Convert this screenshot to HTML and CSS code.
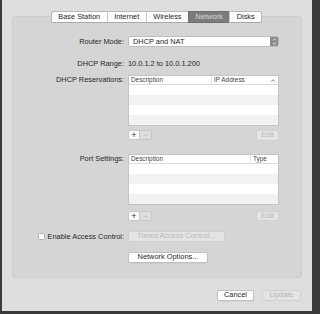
FILE: index.html
```html
<!DOCTYPE html>
<html>
<head>
<meta charset="utf-8">
<link rel="stylesheet" href="styles.css">
</head>
<body>
<div class="window">
  <div class="group">
    <div class="tabs">
      <div class="tab">Base Station</div>
      <div class="tab">Internet</div>
      <div class="tab">Wireless</div>
      <div class="tab selected">Network</div>
      <div class="tab">Disks</div>
    </div>

    <div class="row row-router">
      <div class="label">Router Mode:</div>
      <div class="popup">
        <span class="popup-text">DHCP and NAT</span>
        <span class="popup-arrow">
          <svg width="7" height="9" viewBox="0 0 7 9"><path d="M2 3.2 L3.5 1.8 L5 3.2 M2 5.8 L3.5 7.2 L5 5.8" fill="none" stroke="#f2f2f2" stroke-width="0.9"/></svg>
        </span>
      </div>
    </div>

    <div class="row row-range">
      <div class="label">DHCP Range:</div>
      <div class="value">10.0.1.2 to 10.0.1.200</div>
    </div>

    <div class="row row-table row-res">
      <div class="label label-top">DHCP Reservations:</div>
      <div class="table">
        <div class="thead">
          <div class="th th-desc-res">Description</div>
          <div class="th th-ip">IP Address
            <svg class="sort" width="6" height="5" viewBox="0 0 6 5"><path d="M1.2 3.5 L3 1.7 L4.8 3.5" fill="none" stroke="#555" stroke-width="0.8"/></svg>
          </div>
        </div>
        <div class="tr"></div>
        <div class="tr alt"></div>
        <div class="tr"></div>
        <div class="tr alt"></div>
      </div>
    </div>

    <div class="row row-tools">
      <div class="label"></div>
      <div class="tools">
        <div class="pm">
          <div class="pm-btn plus">+</div>
          <div class="pm-btn minus">−</div>
        </div>
        <div class="btn disabled edit">Edit</div>
      </div>
    </div>

    <div class="row row-table row-port">
      <div class="label label-top">Port Settings:</div>
      <div class="table">
        <div class="thead">
          <div class="th th-desc-port">Description</div>
          <div class="th th-type">Type</div>
        </div>
        <div class="tr"></div>
        <div class="tr alt"></div>
        <div class="tr"></div>
        <div class="tr alt"></div>
      </div>
    </div>

    <div class="row row-tools row-tools2">
      <div class="label"></div>
      <div class="tools">
        <div class="pm">
          <div class="pm-btn plus">+</div>
          <div class="pm-btn minus">−</div>
        </div>
        <div class="btn disabled edit">Edit</div>
      </div>
    </div>

    <div class="row row-access">
      <div class="label label-check">
        <span class="checkbox"></span>
        <span>Enable Access Control:</span>
      </div>
      <div class="btn disabled timed">Timed Access Control...</div>
    </div>

    <div class="row row-options">
      <div class="label"></div>
      <div class="btn options">Network Options...</div>
    </div>
  </div>

  <div class="footer">
    <div class="btn cancel">Cancel</div>
    <div class="btn disabled update">Update</div>
  </div>
</div>
</body>
</html>
```

FILE: styles.css
```css
* { box-sizing: border-box; }

html, body {
  margin: 0;
  padding: 0;
}

body {
  width: 320px;
  height: 314px;
  background: #3a3a3a;
  font-family: "Liberation Sans", Arial, sans-serif;
  font-size: 7.4px;
  color: #262626;
  overflow: hidden;
}

.window {
  margin-left: 2px;
  width: 310px;
  height: 311px;
  background: #dedede;
  padding-top: 16px;
}

.group {
  margin-left: 10px;
  width: 290px;
  height: 262px;
  background: #d5d5d5;
  border: 1px solid #cdcdcd;
  border-radius: 3px;
}

.tabs {
  display: flex;
  justify-content: center;
  margin-top: -6px;
  margin-left: -1px;
}

.tab {
  height: 12px;
  line-height: 10px;
  padding: 0 6.5px;
  background: #fdfdfd;
  border-top: 1px solid #b9b9b9;
  border-bottom: 1px solid #a9a9a9;
  border-left: 1px solid #c9c9c9;
  white-space: nowrap;
}

.tab:first-child {
  border-left: 1px solid #b9b9b9;
  border-radius: 2.5px 0 0 2.5px;
}

.tab:last-child {
  border-right: 1px solid #b9b9b9;
  border-radius: 0 2.5px 2.5px 0;
}

.tab.selected {
  background: #7c7c7c;
  color: #d9d9d9;
  border-color: #6f6f6f;
}

.row {
  display: flex;
  align-items: center;
  gap: 4px;
}

.label {
  width: 111px;
  flex: none;
  text-align: right;
  white-space: nowrap;
}

.row-router { margin-top: 13px; }

.popup {
  width: 151px;
  height: 11px;
  display: flex;
  background: #ffffff;
  border: 1px solid #bdbdbd;
  border-radius: 2px;
  overflow: hidden;
}

.popup-text {
  flex: 1;
  line-height: 9px;
  padding-left: 4px;
}

.popup-arrow {
  width: 8px;
  background: #8a8a8a;
  display: flex;
  align-items: center;
  justify-content: center;
}

.row-range {
  margin-top: 11px;
  height: 11px;
}

.row-table { align-items: flex-start; }

.row-res { margin-top: 6px; }

.label-top {
  line-height: 9px;
}

.table {
  width: 151px;
  background: #ffffff;
  border: 1px solid #c4c4c4;
}

.thead {
  display: flex;
  height: 9px;
  border-bottom: 1px solid #dcdcdc;
  font-size: 6.4px;
  color: #444;
}

.th {
  line-height: 8px;
  padding-left: 2px;
  position: relative;
}

.th-desc-res { width: 83px; border-right: 1px solid #e2e2e2; }
.th-ip { flex: 1; }
.th-desc-port { width: 122px; border-right: 1px solid #e2e2e2; }
.th-type { flex: 1; }

.sort {
  position: absolute;
  right: 2px;
  top: 1.5px;
}

.tr {
  height: 10px;
  background: #ffffff;
}

.tr.alt { background: #f2f2f2; }

.row-tools { margin-top: 4px; }
.row-tools2 { margin-top: 6px; }

.tools {
  width: 151px;
  display: flex;
  justify-content: space-between;
  align-items: flex-start;
}

.pm { display: flex; }

.pm-btn {
  width: 12px;
  height: 10px;
  line-height: 8px;
  text-align: center;
  font-size: 9px;
  border: 1px solid #c6c6c6;
}

.pm-btn.plus {
  background: #fbfbfb;
  color: #333;
  border-radius: 2px 0 0 2px;
}

.pm-btn.minus {
  background: #dedede;
  color: #bdbdbd;
  border-left: none;
  border-radius: 0 2px 2px 0;
}

.btn {
  height: 10.5px;
  line-height: 8.5px;
  text-align: center;
  background: #ffffff;
  border: 1px solid #c0c0c0;
  border-radius: 2px;
  white-space: nowrap;
  box-shadow: 0 0.5px 0 rgba(0,0,0,0.08);
}

.btn.disabled {
  background: #e4e4e4;
  color: #b7b7b7;
  border-color: #d0d0d0;
  box-shadow: none;
}

.edit { width: 23px; }

.row-port { margin-top: 13px; }

.row-access { margin-top: 10px; }

.label-check {
  display: flex;
  justify-content: flex-end;
  align-items: center;
  gap: 2.5px;
}

.checkbox {
  width: 7px;
  height: 7px;
  background: #ffffff;
  border: 1px solid #b0b0b0;
  border-radius: 1.5px;
}

.timed { width: 97px; }

.row-options { margin-top: 10.5px; }

.options { width: 80px; }

.footer {
  display: flex;
  justify-content: flex-end;
  gap: 8px;
  padding-right: 11px;
  margin-top: 12px;
}

.cancel { width: 37px; }
.update { width: 39px; }
```
